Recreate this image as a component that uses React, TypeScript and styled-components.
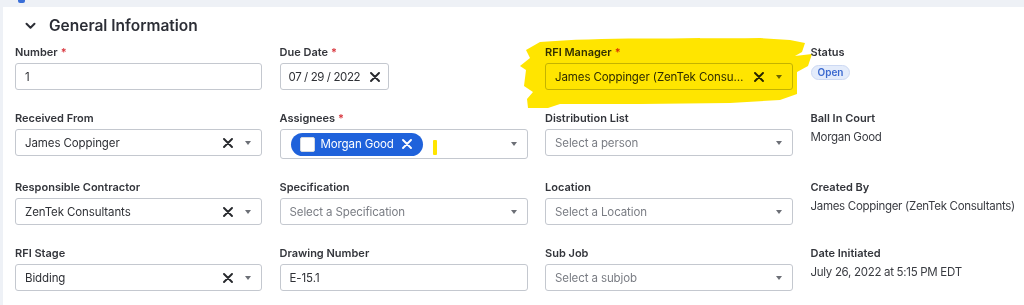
import React from "react";
import styled, { createGlobalStyle } from "styled-components";

const GlobalStyle = createGlobalStyle`
  html, body {
    margin: 0;
    padding: 0;
    background: #eef1f6;
    font-family: Inter, "Noto Sans", Arial, sans-serif;
    color: #2b2d33;
  }
  * { box-sizing: border-box; }
`;

const Page = styled.div`
  position: relative;
  width: 1024px;
  height: 305px;
  overflow: hidden;
  padding: 7px 0 0 3px;
  background: #eef1f6;
`;

const TopMark = styled.div`
  position: absolute;
  left: 18px;
  top: 0;
  width: 7px;
  height: 3px;
  border-radius: 0 0 2px 2px;
  background: #3a6fd8;
`;

const Panel = styled.section`
  background: #fff;
  height: 100%;
  padding: 0 12px;
`;

const Header = styled.div`
  display: flex;
  align-items: center;
  height: 37px;
  padding-left: 10px;
  gap: 13px;
`;

const Title = styled.h2`
  margin: 0;
  font-size: 15.5px;
  font-weight: 600;
  color: #2c2e36;
`;

const Grid = styled.div`
  display: grid;
  grid-template-columns: 247px 248px 248px 1fr;
  column-gap: 17.5px;
  row-gap: 20px;
  align-items: start;
`;

const Field = styled.div`
  display: flex;
  flex-direction: column;
  gap: 3px;
`;

const Label = styled.div`
  font-size: 11px;
  line-height: 16px;
  font-weight: 600;
  color: #33353b;
`;

const Req = styled.span`
  color: #d93a42;
  margin-left: 3px;
`;

const Box = styled.div<{ $width?: number; $tall?: boolean }>`
  display: flex;
  align-items: center;
  width: ${({ $width }) => ($width ? `${$width}px` : "100%")};
  height: ${({ $tall }) => ($tall ? "30px" : "27px")};
  border: 1px solid #c4c8cf;
  border-radius: 3px;
  background: #fff;
  padding: 0 ${({ $width }) => ($width ? 8 : 10)}px 0 9px;
  font-size: 11.5px;
  letter-spacing: -0.1px;
  color: #2f3136;
`;

const Value = styled.span<{ $placeholder?: boolean }>`
  flex: 1;
  white-space: nowrap;
  overflow: hidden;
  text-overflow: ellipsis;
  color: ${({ $placeholder }) => ($placeholder ? "#7a7d84" : "#2f3136")};
`;

const DateValue = styled.span`
  flex: 1;
  white-space: nowrap;
  margin-left: -1px;
  letter-spacing: -0.4px;
`;

const Clear = styled.span<{ $gap?: number }>`
  display: flex;
  width: 10px;
  height: 10px;
  margin-left: ${({ $gap }) => ($gap ?? 10)}px;
`;

const Caret = styled.span`
  width: 0;
  height: 0;
  margin-left: 12px;
  border-left: 3.5px solid transparent;
  border-right: 3.5px solid transparent;
  border-top: 4px solid #6c6f76;
`;

const Chip = styled.div`
  display: flex;
  align-items: center;
  height: 23px;
  padding: 0 11px 0 9px;
  margin-left: 1px;
  border-radius: 12px;
  background: #1f62db;
  color: #fff;
  font-size: 11.5px;
  gap: 6px;
`;

const ChipBox = styled.span`
  width: 15px;
  height: 15px;
  border-radius: 2px;
  background: #fff;
  border: 1px solid #d5d9e0;
`;

const Spacer = styled.span`
  flex: 1;
`;

const Static = styled.div`
  font-size: 11.5px;
  letter-spacing: -0.3px;
  line-height: 16px;
  color: #3a3c42;
  white-space: nowrap;
`;

const Badge = styled.span`
  align-self: flex-start;
  margin-top: 2px;
  padding: 0 6px;
  height: 15px;
  line-height: 13px;
  border-radius: 8px;
  background: #e4ecfb;
  border: 1px solid #cdd9f3;
  color: #3a68cf;
  font-size: 10px;
  font-weight: 600;
`;

const Highlight = styled.svg`
  position: absolute;
  left: 0;
  top: 0;
  mix-blend-mode: multiply;
  pointer-events: none;
`;

const XIcon = ({ color = "#26282c" }: { color?: string }) => (
  <svg width="10" height="10" viewBox="0 0 10 10">
    <path d="M1 1 L9 9 M9 1 L1 9" stroke={color} strokeWidth="1.9" strokeLinecap="round" />
  </svg>
);

const Chevron = () => (
  <svg width="11" height="8" viewBox="0 0 11 8">
    <path d="M1.5 1.8 L5.5 5.8 L9.5 1.8" fill="none" stroke="#2c2e36" strokeWidth="2" strokeLinecap="round" strokeLinejoin="round" />
  </svg>
);

type SelectProps = { value?: string; placeholder?: string; clearable?: boolean };

const Select = ({ value, placeholder, clearable }: SelectProps) => (
  <Box>
    <Value $placeholder={!value}>{value || placeholder}</Value>
    {clearable && (
      <Clear>
        <XIcon />
      </Clear>
    )}
    <Caret />
  </Box>
);

export default function App() {
  return (
    <>
      <GlobalStyle />
      <Page>
        <TopMark />
        <Panel>
          <Header>
            <Chevron />
            <Title>General Information</Title>
          </Header>
          <Grid>
            <Field>
              <Label>
                Number<Req>*</Req>
              </Label>
              <Box>
                <Value>1</Value>
              </Box>
            </Field>
            <Field>
              <Label>
                Due Date<Req>*</Req>
              </Label>
              <Box $width={109}>
                <DateValue>07 / 29 / 2022</DateValue>
                <Clear $gap={4}>
                  <XIcon />
                </Clear>
              </Box>
            </Field>
            <Field>
              <Label>
                RFI Manager<Req>*</Req>
              </Label>
              <Select value="James Coppinger (ZenTek Consultants)" clearable />
            </Field>
            <Field>
              <Label>Status</Label>
              <Badge>Open</Badge>
            </Field>

            <Field>
              <Label>Received From</Label>
              <Select value="James Coppinger" clearable />
            </Field>
            <Field>
              <Label>
                Assignees<Req>*</Req>
              </Label>
              <Box $tall>
                <Chip>
                  <ChipBox />
                  <span>Morgan Good</span>
                  <Clear $gap={2}>
                    <XIcon color="#fff" />
                  </Clear>
                </Chip>
                <Spacer />
                <Caret />
              </Box>
            </Field>
            <Field>
              <Label>Distribution List</Label>
              <Select placeholder="Select a person" />
            </Field>
            <Field>
              <Label>Ball In Court</Label>
              <Static>Morgan Good</Static>
            </Field>

            <Field>
              <Label>Responsible Contractor</Label>
              <Select value="ZenTek Consultants" clearable />
            </Field>
            <Field>
              <Label>Specification</Label>
              <Select placeholder="Select a Specification" />
            </Field>
            <Field>
              <Label>Location</Label>
              <Select placeholder="Select a Location" />
            </Field>
            <Field>
              <Label>Created By</Label>
              <Static>James Coppinger (ZenTek Consultants)</Static>
            </Field>

            <Field>
              <Label>RFI Stage</Label>
              <Select value="Bidding" clearable />
            </Field>
            <Field>
              <Label>Drawing Number</Label>
              <Box>
                <Value>E-15.1</Value>
              </Box>
            </Field>
            <Field>
              <Label>Sub Job</Label>
              <Select placeholder="Select a subjob" />
            </Field>
            <Field>
              <Label>Date Initiated</Label>
              <Static>July 26, 2022 at 5:15 PM EDT</Static>
            </Field>
          </Grid>
        </Panel>
        <Highlight width="1024" height="305" viewBox="0 0 1024 305">
          <path
            d="M540 42 C600 37 680 39 760 38 L790 40 L805 43 L802 52 L795 56 L812 54 L808 66 L797 72 L797 94 L780 100 L730 103 L640 104 L560 104 L548 108 L528 108 L527 99 L533 92 L524 86 L526 70 L520 66 L530 58 L526 50 Z"
            fill="#ffe500"
          />
          <rect x="433" y="140" width="4" height="15" rx="1" fill="#ffe500" />
        </Highlight>
      </Page>
    </>
  );
}
